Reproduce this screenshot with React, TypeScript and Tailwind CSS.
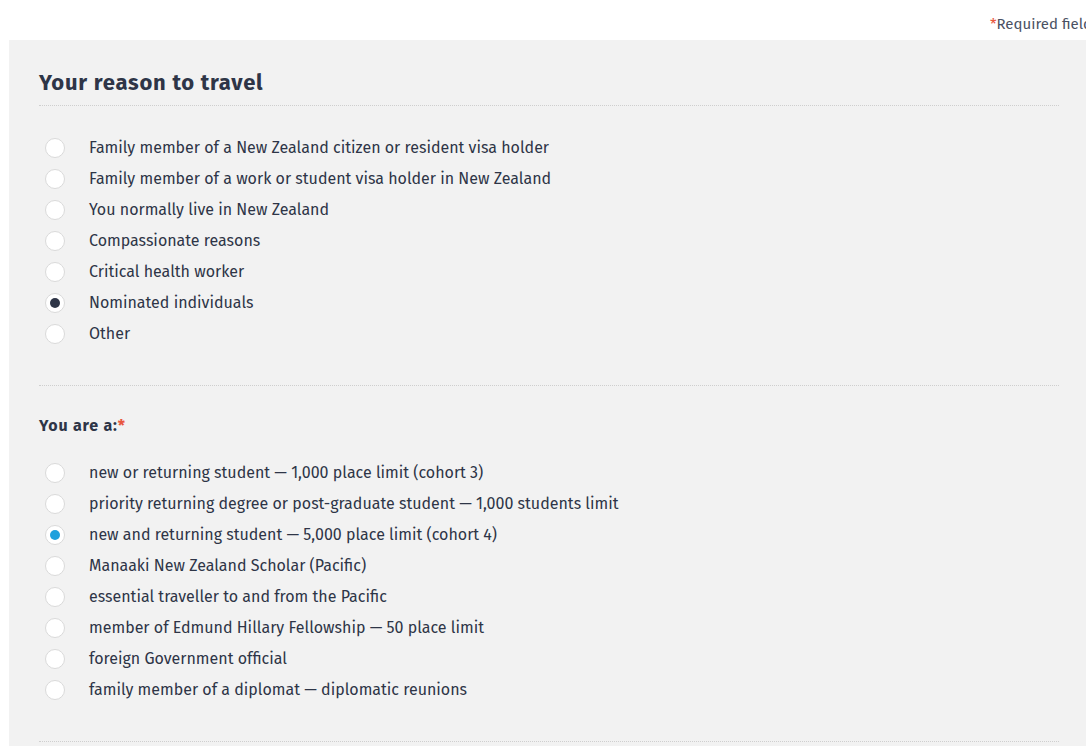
const reasons = [
  "Family member of a New Zealand citizen or resident visa holder",
  "Family member of a work or student visa holder in New Zealand",
  "You normally live in New Zealand",
  "Compassionate reasons",
  "Critical health worker",
  "Nominated individuals",
  "Other",
]

const youAre = [
  "new or returning student — 1,000 place limit (cohort 3)",
  "priority returning degree or post-graduate student — 1,000 students limit",
  "new and returning student — 5,000 place limit (cohort 4)",
  "Manaaki New Zealand Scholar (Pacific)",
  "essential traveller to and from the Pacific",
  "member of Edmund Hillary Fellowship — 50 place limit",
  "foreign Government official",
  "family member of a diplomat — diplomatic reunions",
]

function Radio({ label, checked, dot }: { label: string; checked?: boolean; dot?: string }) {
  return (
    <label className="flex h-[31px] items-center">
      <span className="ml-[6px] flex h-[20px] w-[20px] items-center justify-center rounded-full border border-[#dadada] bg-white">
        {checked && <span className={`h-[10px] w-[10px] rounded-full ${dot}`} />}
      </span>
      <span className="ml-[24px] text-[16px] leading-[22px] text-[#2e3547]">{label}</span>
    </label>
  )
}

export default function App() {
  return (
    <div className="h-[746px] overflow-hidden bg-white font-['Fira_Sans','Noto_Sans',sans-serif]">
      <div className="flex h-[40px] justify-end pt-[14px]">
        <span className="mr-[-6px] whitespace-nowrap text-[15px] leading-[20px] text-[#4a5163]">
          <span className="text-[#e8573f]">*</span>Required field
        </span>
      </div>
      <div className="ml-[9px] bg-[#f2f2f2] pl-[30px] pr-[27px] pt-[29px]">
        <h2 className="border-b border-dotted border-[#cfcfcf] pb-[8px] text-[22px] font-bold leading-[28px] tracking-[0.75px] text-[#2e3547]">
          Your reason to travel
        </h2>
        <div className="mt-[26px] flex flex-col">
          {reasons.map((r) => (
            <Radio key={r} label={r} checked={r === "Nominated individuals"} dot="bg-[#2e3547]" />
          ))}
        </div>
        <div className="mt-[36px] border-b border-dotted border-[#cfcfcf]" />
        <div className="mt-[29px] text-[16px] font-bold leading-[22px] tracking-[0.8px] text-[#2e3547]">
          You are a:<span className="text-[#e8573f]">*</span>
        </div>
        <div className="mt-[20px] flex flex-col">
          {youAre.map((r) => (
            <Radio key={r} label={r} checked={r.startsWith("new and")} dot="bg-[#1ea0dd]" />
          ))}
        </div>
        <div className="mt-[36px] border-b border-dotted border-[#cfcfcf]" />
        <div className="h-[40px]" />
      </div>
    </div>
  )
}
